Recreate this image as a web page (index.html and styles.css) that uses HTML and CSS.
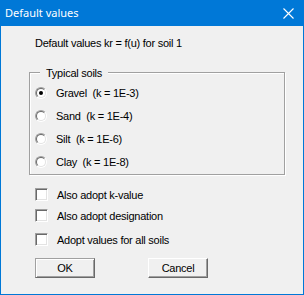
FILE: index.html
```html
<!DOCTYPE html>
<html lang="en">
<head>
  <meta charset="UTF-8">
  <title>Default values</title>
  <link rel="stylesheet" href="styles.css">
</head>
<body>
  <div class="window">
    <div class="titlebar">
      <span class="title">Default values</span>
      <svg class="close" width="11" height="11" viewBox="0 0 11 11">
        <path d="M0.5 0.5 L10.5 10.5 M10.5 0.5 L0.5 10.5" stroke="#fff" stroke-width="1.1" fill="none"/>
      </svg>
    </div>

    <div class="dialog">
      <p class="caption">Default values kr = f(u) for soil 1</p>

      <!-- Typical soils -->
      <fieldset class="group">
        <legend>Typical soils</legend>
        <label class="radio-row"><span class="radio checked"></span>Gravel&nbsp; (k = 1E-3)</label>
        <label class="radio-row"><span class="radio"></span>Sand&nbsp; (k = 1E-4)</label>
        <label class="radio-row"><span class="radio"></span>Silt&nbsp; (k = 1E-6)</label>
        <label class="radio-row"><span class="radio"></span>Clay&nbsp; (k = 1E-8)</label>
      </fieldset>

      <div class="checks">
        <label class="check-row"><span class="checkbox"></span>Also adopt k-value</label>
        <label class="check-row second"><span class="checkbox"></span>Also adopt designation</label>
        <label class="check-row third"><span class="checkbox"></span>Adopt values for all soils</label>
      </div>

      <div class="buttons">
        <button class="btn default">OK</button>
        <button class="btn">Cancel</button>
      </div>
    </div>
  </div>
</body>
</html>
```

FILE: styles.css
```css
:root {
  --win-blue: #0078d7;
  --face: #f0f0f0;
  --shadow: #a0a0a0;
  --dark: #696969;
  --light: #e3e3e3;
}

html, body {
  margin: 0;
  padding: 0;
  background: var(--face);
}

body {
  font-family: 'Liberation Sans', Arial, sans-serif;
  font-size: 11px;
  color: #000;
}

.window {
  width: 304px;
  height: 295px;
  box-sizing: border-box;
  border: 1px solid var(--win-blue);
  border-top: none;
  background: var(--face);
  display: flex;
  flex-direction: column;
}

.titlebar {
  height: 26px;
  margin: 0 -1px;
  background: var(--win-blue);
  display: flex;
  align-items: center;
  justify-content: space-between;
  padding: 0 10px 0 5px;
  flex-shrink: 0;
}

.title {
  font-family: 'Noto Sans', sans-serif;
  font-size: 11px;
  color: #fff;
  line-height: 16px;
  padding-bottom: 1px;
}

.close {
  display: block;
}

.dialog {
  padding: 11px 0 0 28px;
  display: flex;
  flex-direction: column;
  align-items: flex-start;
  letter-spacing: -0.25px;
}

.caption {
  margin: 0 0 0 6px;
  line-height: 13px;
}

/* group box with etched frame */
.group {
  width: 256px;
  box-sizing: border-box;
  margin: 14px 0 0 0;
  padding: 1px 0 1px 5px;
  border: 1px solid var(--shadow);
  box-shadow: 1px 1px 0 #fff, inset 1px 1px 0 #fff;
  min-width: 0;
}

.group legend {
  margin-left: 5px;
  padding: 3px 6px 0 6px;
  line-height: 13px;
  background: var(--face);
}

.radio-row {
  display: flex;
  align-items: center;
  height: 23px;
  gap: 9px;
}

.radio {
  width: 12px;
  height: 12px;
  box-sizing: border-box;
  border-radius: 50%;
  border: 1px solid;
  border-color: var(--shadow) #fff #fff var(--shadow);
  position: relative;
  flex-shrink: 0;
}

.radio::before {
  content: '';
  position: absolute;
  inset: 0;
  border-radius: 50%;
  border: 1px solid;
  border-color: var(--dark) var(--light) var(--light) var(--dark);
  background: #fff;
}

.radio.checked::after {
  content: '';
  position: absolute;
  left: 3px;
  top: 3px;
  width: 4px;
  height: 4px;
  border-radius: 50%;
  background: #000;
}

.checks {
  margin: 13px 0 0 6px;
  display: flex;
  flex-direction: column;
}

.check-row {
  display: flex;
  align-items: center;
  height: 13px;
  gap: 9px;
}

.check-row.second {
  margin-top: 8px;
}

.check-row.third {
  margin-top: 11px;
}

.checkbox {
  width: 13px;
  height: 13px;
  box-sizing: border-box;
  border: 1px solid;
  border-color: var(--shadow) #fff #fff var(--shadow);
  background: #fff;
  box-shadow: inset 1px 1px 0 var(--dark), inset -1px -1px 0 var(--light);
  flex-shrink: 0;
}

.buttons {
  margin: 12px 0 0 6px;
  display: flex;
  gap: 53px;
}

.btn {
  width: 60px;
  height: 20px;
  box-sizing: border-box;
  font-family: 'Liberation Sans', Arial, sans-serif;
  font-size: 11px;
  letter-spacing: -0.25px;
  color: #000;
  background: var(--face);
  border: 1px solid;
  border-color: #fff var(--dark) var(--dark) #fff;
  box-shadow: inset -1px -1px 0 var(--shadow);
  padding: 0;
  margin: 0;
}

.btn.default {
  border-color: var(--shadow) var(--dark) var(--dark) var(--shadow);
  box-shadow: inset 1px 1px 0 #fff, inset -1px -1px 0 var(--shadow);
}
```
